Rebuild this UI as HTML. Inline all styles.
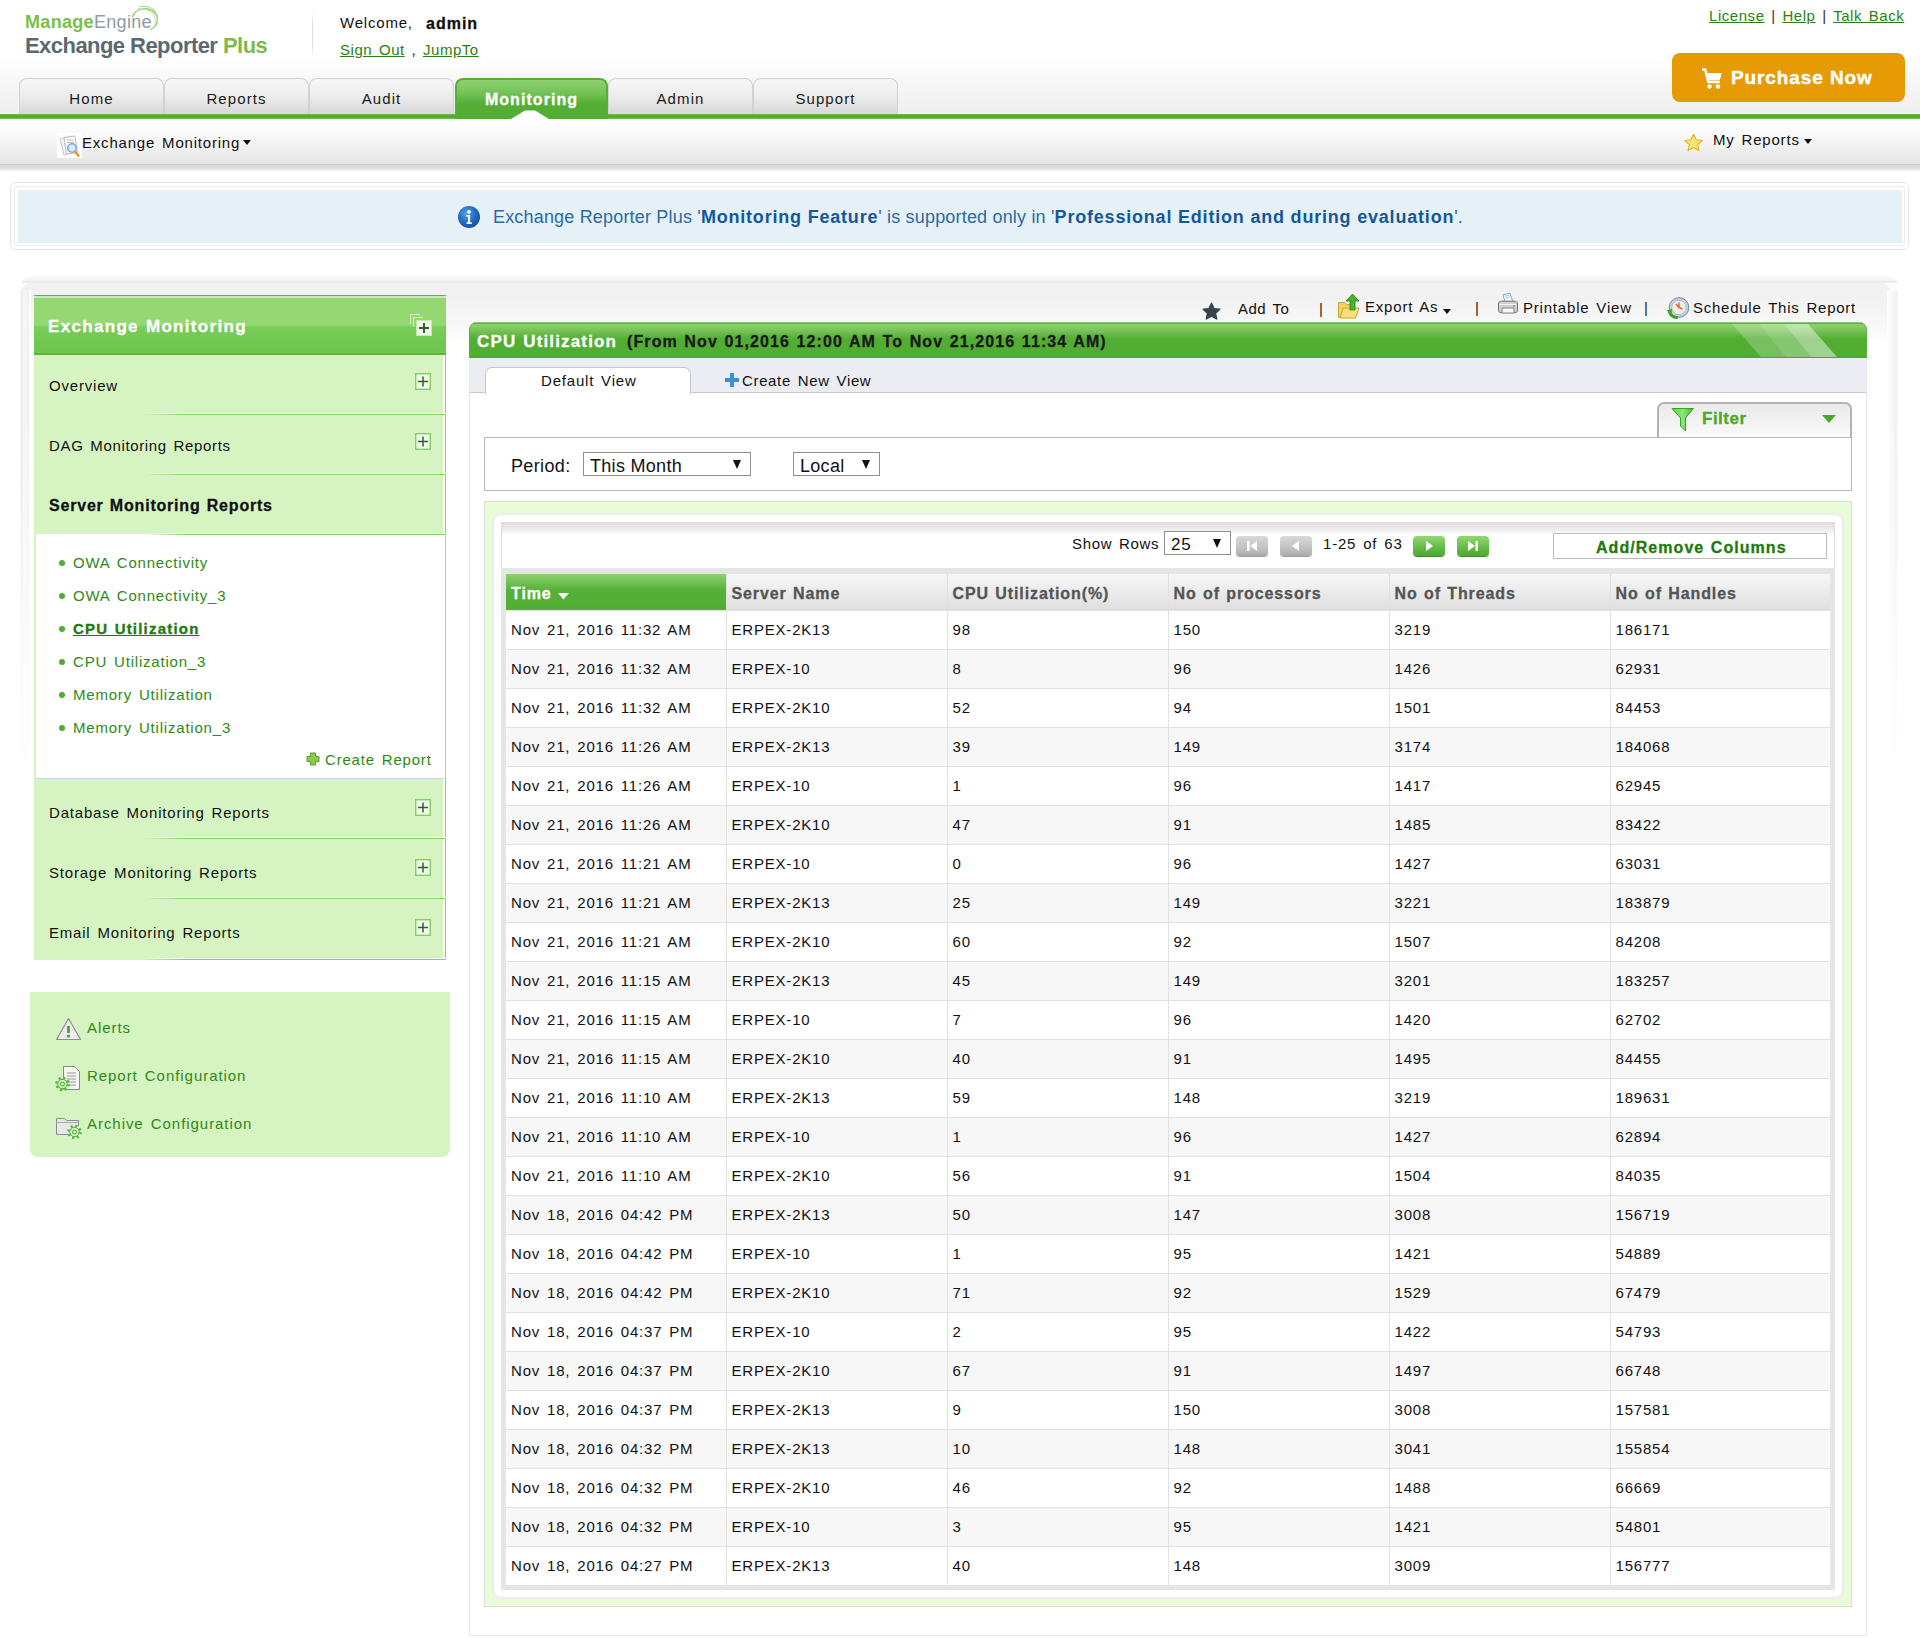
<!DOCTYPE html>
<html><head><meta charset="utf-8">
<style>
*{box-sizing:border-box}
html,body{margin:0;padding:0}
body{width:1920px;height:1639px;overflow:hidden;position:relative;background:#fff;font-family:"Liberation Sans",sans-serif;font-size:15px;color:#111;letter-spacing:.8px;word-spacing:2px}
.a{position:absolute}
.t{position:absolute;white-space:nowrap;line-height:1}
.b{font-weight:bold;font-size:16px;letter-spacing:1px;word-spacing:1px;-webkit-text-stroke:.3px}
a,.lnk{color:#2c7f12;text-decoration:underline}
/* header */
#hdr{left:0;top:0;width:1920px;height:114px;background:linear-gradient(#fff 0,#fff 59px,#f7f7f7 80px,#efefef 114px)}
#gline{left:0;top:114px;width:1920px;height:5px;background:linear-gradient(#7cc264 0,#52ad35 1px,#52ad35 4px,#8ccb75 5px)}
.tab{position:absolute;top:78px;height:40px;width:145px;border:1px solid #d2d2d2;border-bottom:none;border-radius:8px 8px 0 0;background:linear-gradient(#f7f7f7 0,#ececec 45%,#dcdcdc 80%,#d6d6d6 100%);text-align:center;font-size:15px;color:#1b1b1b;line-height:40px;letter-spacing:1.1px}
.tab.on{background:linear-gradient(#8fd070 0,#72c255 35%,#55af37 60%,#52ad35 100%);border:2px solid #55b038;border-bottom:none;color:#fff;font-weight:bold;font-size:16px;letter-spacing:1.05px;line-height:39px;-webkit-text-stroke:.3px}
#sub{left:0;top:119px;width:1920px;height:45px;background:linear-gradient(#fff 0,#f9f9f9 35%,#ececec 75%,#e4e4e4 100%)}
#subsh{left:0;top:164px;width:1920px;height:7px;background:linear-gradient(#cbcbcb 0,#d8d8d8 1.5px,#dedede 4px,#ececec 6px,#fafafa 7px)}
/* info */
#info1{left:10px;top:182px;width:1899px;height:68px;border:1px solid #e6e6f0;border-radius:5px}
#info2{left:14px;top:186px;width:1891px;height:60px;border:1px solid #ececf4;border-radius:2px}
#info3{left:18px;top:190px;width:1884px;height:53px;background:#e6f1f7}
/* main */
#mainsh{left:20px;top:276px;width:1879px;height:560px;border-radius:12px 12px 0 0;background:linear-gradient(#fcfcfc 0,#f3f3f3 4px,#e8e8e8 7px,transparent 7px);-webkit-mask-image:linear-gradient(#000 0,#000 150px,transparent 500px)}
#mainsh2{left:21px;top:283px;width:1870px;height:560px;border-radius:9px 9px 0 0;box-shadow:-1px 0 3px rgba(0,0,0,.06),1px 0 5px rgba(0,0,0,.06);background:linear-gradient(#f1f1f1 0,#f2f2f2 15px,#f7f7f7 40px,#fdfdfd 58px,#fff 65px);-webkit-mask-image:linear-gradient(#000 0,#000 150px,transparent 490px)}
/* left panel */
#lhead{left:34px;top:295px;width:412px;height:60px;background:linear-gradient(#5cb53c 0,#5cb53c 1px,#c8eab8 1px,#c8eab8 3px,#95d872 3px,#95d872 30px,#78cc59 32px,#6cc64c 58px,#5cb53c 58px)}
.lsec{position:absolute;left:34px;width:412px;height:60px;background:#d6f4c2}
.lsec .rb{position:absolute;right:0;top:0;bottom:0;width:3px;background:linear-gradient(90deg,#fafdf8 0,#fafdf8 2px,#86cf6a 2px)}
.lsep{position:absolute;left:34px;width:412px;height:2px;background:linear-gradient(#fff 0,#fff 1px,#86cf6a 1px);-webkit-mask-image:linear-gradient(90deg,transparent 0,transparent 110px,#000 150px)}
.plus{position:absolute;left:415px;width:16px;height:17px}
.li{position:absolute;left:73px;color:#2d8a16;font-size:15px;white-space:nowrap;line-height:1}
.bul{position:absolute;left:59px;width:6px;height:6px;border-radius:3px;background:#4fad35}
.lbot{position:absolute;color:#2d8a16;font-size:15px;white-space:nowrap;line-height:1;letter-spacing:.95px}
/* right */
#cbox{left:469px;top:357px;width:1398px;height:1279px;border:1px solid #e6e6ee;border-top:none;background:#fff}
#chead{left:469px;top:322px;width:1398px;height:36px;border-radius:8px 8px 0 0;background:linear-gradient(#8cc77a 0,#8cc77a 1px,#5cb43c 1px,#5cb43c 2px,#90cf6f 2.5px,#7bc45c 8px,#62b744 13px,#52ae33 17px,#52ae33 34px,#48a828 35px);border:1px solid #56b039;border-top:none;border-bottom:none;overflow:hidden}
#tabstrip{left:470px;top:358px;width:1396px;height:35px;background:#ecedf3;border-bottom:1px solid #c9c9cf}
#dview{left:485px;top:367px;width:206px;height:27px;background:#fff;border:1px solid #c8c8cc;border-bottom:none;border-radius:7px 7px 0 0}
#pbox{left:484px;top:437px;width:1368px;height:54px;border:1px solid #b8b8b8}
#ftab{left:1657px;top:402px;width:195px;height:36px;border:2px solid #b3b3b3;border-bottom:none;border-radius:7px 7px 0 0;background:linear-gradient(#e9e9e9,#f3f3f3 60%,#fcfcfc)}
.sel{position:absolute;height:24px;border:1px solid #8f8f8f;background:#fff;font-size:18px;line-height:26px;padding-left:6px;letter-spacing:.3px;word-spacing:0}
.sel:after{content:"";position:absolute;right:9px;top:7px;border-left:4.5px solid transparent;border-right:4.5px solid transparent;border-top:9px solid #111}
#gbox{left:484px;top:501px;width:1368px;height:106px;background:#e8fcd8;border:1px solid #d8e4d0}
#gbox2{left:484px;top:501px;width:1368px;height:1106px;background:#e8fcd8;border:1px solid #d9ddd6}
#wbox{left:492px;top:513px;width:1352px;height:1086px;background:#fff;border:2px solid #ececf4;border-radius:9px}
#tbar{left:501px;top:522px;width:1334px;height:52px;border:1px solid #dcdcdc;border-bottom:none;background:linear-gradient(#dedede 0,#f2f2f2 8px,#fff 12px,#fff 100%)}
#tframe{left:501px;top:568px;width:1334px;height:1022px;background:#e5e5e5}
#tbl{position:absolute;left:506px;top:574px;width:1324px;border-collapse:collapse;table-layout:fixed}
#tbl th{height:36px;padding:5px 0 0 5px;text-align:left;font-weight:bold;color:#555;font-size:16px;letter-spacing:.9px;word-spacing:1px;-webkit-text-stroke:.3px;background:linear-gradient(#f6f6f6 0,#ececec 45%,#dedede 100%);border-left:1px solid #e0e0e0;white-space:nowrap}
#tbl th.tm{background:linear-gradient(#8dd26d 0,#6fc052 25%,#55b038 45%,#51ae34 100%);color:#fff;border-left:none}
#tbl td{height:39px;padding:0 0 1px 5px;font-size:15px;color:#111;border-left:1px solid #e2e2e2;border-top:1px solid #e2e2e2;white-space:nowrap}
#tbl td:first-child{border-left:none}
#tbl tr:nth-child(odd) td{background:#f7f7f7}
#tbl tr.w td{background:#fff}
.pg{position:absolute;top:536px;width:32px;height:20px;border-radius:4px}
.pg.g{background:linear-gradient(#d9d9d9,#bdbdbd 70%,#a9a9a9);box-shadow:0 1px 0 #9c9c9c}
.pg.gr{background:linear-gradient(#93d873,#62bb45 60%,#4ea732);box-shadow:0 1px 0 #3f8f27}
.pg svg{position:absolute;left:0;top:0}
</style></head><body>
<!-- HEADER -->
<div id="hdr" class="a"></div>
<!-- logo -->
<div class="t" style="left:25px;top:13px;font-size:18px;letter-spacing:.32px"><span style="font-weight:bold;color:#78c047">Manage</span><span style="color:#8d9ca8">Engine</span></div>
<svg class="a" style="left:120px;top:0" width="45" height="35" viewBox="120 0 45 35"><g fill="none" stroke-linecap="round"><path d="M132.5 16.5C135.5 10 142 8 148 9C154 10.5 158 15 157.5 20.5C157 25 154 28 150.5 29.5" stroke="#8fcc66" stroke-width="1.3"/><path d="M139.5 6.5C146 5.5 152 7.5 155 11.5C158 15.5 158.5 21 156 25" stroke="#a5d784" stroke-width="1.1"/><path d="M138 9C145 8 150.5 10.5 153 14C155.5 17.5 156 22 154.5 25.5" stroke="#b9e0a0" stroke-width="1"/></g></svg>
<div class="t" style="left:25px;top:35px;font-size:22px;font-weight:bold;color:#5b6872;letter-spacing:-.55px;word-spacing:0">Exchange Reporter <span style="color:#7cba4a">Plus</span></div>
<div class="a" style="left:312px;top:12px;width:1px;height:46px;background:linear-gradient(rgba(220,220,220,0),#dcdcdc 30%,#dcdcdc 70%,rgba(220,220,220,0))"></div>
<div class="t" style="left:340px;top:15px;color:#111">Welcome,</div>
<div class="t b" style="left:426px;top:16px;color:#111">admin</div>
<div class="t" style="left:340px;top:42px;letter-spacing:.55px"><span class="lnk">Sign Out</span> , <span class="lnk">JumpTo</span></div>
<div class="t" style="left:1709px;top:8px;color:#333;letter-spacing:.55px"><span class="lnk">License</span> | <span class="lnk">Help</span> | <span class="lnk">Talk Back</span></div>
<!-- purchase -->
<div class="a" style="left:1672px;top:53px;width:233px;height:49px;border-radius:8px;background:#e69a04"></div>
<svg class="a" style="left:1701px;top:67px" width="22" height="23" viewBox="0 0 22 23"><path d="M1 2.5h3.2l3 12.5h11.5" fill="none" stroke="#fff" stroke-width="2.4" stroke-linejoin="round"/><path d="M5.2 6h15.6l-2 7.2H7z" fill="#fff"/><circle cx="8.5" cy="19.5" r="2.2" fill="#fff"/><circle cx="17" cy="19.5" r="2.2" fill="#fff"/></svg>
<div class="t" style="left:1731px;top:68px;color:#fff;font-size:19px;font-weight:bold;letter-spacing:.9px;word-spacing:0;-webkit-text-stroke:.45px #fff">Purchase Now</div>
<!-- tabs -->
<div class="tab" style="left:19px">Home</div>
<div class="tab" style="left:164px">Reports</div>
<div class="tab" style="left:309px">Audit</div>
<div class="tab" style="left:608px">Admin</div>
<div class="tab" style="left:753px">Support</div>
<div id="gline" class="a"></div>
<div class="tab on" style="left:455px;width:153px;height:41px">Monitoring</div>
<svg class="a" style="left:510px;top:109px" width="40" height="10" viewBox="0 0 40 10"><path d="M1 10L15 1.5h10L39 10z" fill="#fff"/></svg>
<!-- subnav -->
<div id="sub" class="a"></div>
<div id="subsh" class="a"></div>
<svg class="a" style="left:57px;top:133px" width="25" height="25" viewBox="0 0 25 25"><rect x="0" y="0" width="25" height="25" fill="#fff"/><path d="M3 6l12-3 4 16-12 3z" fill="#f2f2f2" stroke="#c8c8c8"/><path d="M7 4.5l11-1.5 2.5 16.5-11 1.5z" fill="#fafafa" stroke="#bdbdbd"/><path d="M10 7h7M10 9.5h7" stroke="#c4c4c4"/><circle cx="15" cy="15" r="4.2" fill="#d4ecfb" stroke="#7ea8de" stroke-width="1.6"/><path d="M18 18.5l4 5" stroke="#e79a22" stroke-width="2.4"/></svg>
<div class="t" style="left:82px;top:135px;color:#111">Exchange Monitoring</div>
<div class="a" style="left:243px;top:140px;border-left:4px solid transparent;border-right:4px solid transparent;border-top:5px solid #111"></div>
<svg class="a" style="left:1683px;top:133px" width="21" height="20" viewBox="0 0 21 20"><path d="M10.5 1.2l2.6 5.6 6.1.7-4.5 4.1 1.2 6-5.4-3-5.4 3 1.2-6-4.5-4.1 6.1-.7z" fill="#f8e27a" stroke="#e0b318" stroke-width="1.1" stroke-linejoin="round"/></svg>
<div class="t" style="left:1713px;top:132px;color:#111">My Reports</div>
<div class="a" style="left:1804px;top:139px;border-left:4px solid transparent;border-right:4px solid transparent;border-top:5px solid #111"></div>
<!-- info bar -->
<div id="info1" class="a"></div>
<div id="info2" class="a"></div>
<div id="info3" class="a"></div>
<svg class="a" style="left:457px;top:205px" width="24" height="24" viewBox="0 0 24 24"><defs><radialGradient id="ig" cx=".4" cy=".35" r=".7"><stop offset="0" stop-color="#5aa6ea"/><stop offset=".6" stop-color="#1e68be"/><stop offset="1" stop-color="#164f98"/></radialGradient></defs><circle cx="12" cy="12" r="11" fill="url(#ig)"/><circle cx="12" cy="6.8" r="1.9" fill="#fff"/><path d="M9.5 10h3.6v7.2h1.6v1.8H9.5v-1.8h1.6v-5.4H9.5z" fill="#fff"/></svg>
<div class="t" style="left:493px;top:208px;font-size:18px;letter-spacing:.18px;word-spacing:0;color:#2b69a3">Exchange Reporter Plus '<b style="color:#14579b;letter-spacing:.8px">Monitoring Feature</b>' is supported only in '<b style="color:#14579b;letter-spacing:.8px">Professional Edition and during evaluation</b>'.</div>
<!-- main container -->
<div id="mainsh" class="a"></div>
<div id="mainsh2" class="a"></div>
<div class="a" style="left:20px;top:290px;width:11px;height:500px;background:linear-gradient(90deg,#f7f7f7 0,#ebebeb 1.5px,#f3f3f3 3px,#f6f6f6 6px,#f0f0f0 8px,#fbfbfb 10px,#fff 11px);-webkit-mask-image:linear-gradient(#000 0,#000 120px,transparent 490px)"></div>
<div class="a" style="left:1887px;top:290px;width:11px;height:500px;background:linear-gradient(270deg,#f9f9f9 0,#efefef 2px,#f5f5f5 4px,#f8f8f8 7px,#fff 11px);-webkit-mask-image:linear-gradient(#000 0,#000 120px,transparent 490px)"></div>

<!-- LEFT PANEL -->
<div id="lhead" class="a"></div>
<div class="t b" style="left:48px;top:318px;color:#fff;font-size:17px;letter-spacing:1.32px">Exchange Monitoring</div>
<svg class="a" style="left:408px;top:312px" width="26" height="25" viewBox="0 0 26 25"><g fill="none" stroke="#d9f2cc" stroke-width="1"><path d="M2.5 12V2.5H12"/><path d="M5.5 15V5.5H15"/></g><rect x="8.5" y="8.5" width="15" height="15" fill="#f4fbf0" stroke="#c6eab3"/><path d="M11 16h10M16 11v10" stroke="#2f5f22" stroke-width="2"/></svg>
<div class="lsec" style="top:355px"><div class="rb"></div></div>
<div class="lsec" style="top:415px"><div class="rb"></div></div>
<div class="lsec" style="top:475px"><div class="rb"></div></div>
<div class="a" style="left:34px;top:534px;width:412px;height:245px;background:#fff;border-left:2px solid #d3f1bf;border-right:1px solid #9ddb83;border-bottom:1px solid #c6d9ec"></div>
<div class="lsec" style="top:779px"><div class="rb"></div></div>
<div class="lsec" style="top:839px"><div class="rb"></div></div>
<div class="lsec" style="top:899px;height:61px"><div class="rb"></div></div>
<div class="lsep" style="top:413px"></div>
<div class="lsep" style="top:473px"></div>
<div class="lsep" style="top:533px"></div>
<div class="lsep" style="top:837px"></div>
<div class="lsep" style="top:897px"></div>
<div class="lsep" style="top:958px"></div>
<div class="t" style="left:49px;top:378px">Overview</div>
<div class="t" style="left:49px;top:438px;letter-spacing:.65px">DAG Monitoring Reports</div>
<div class="t b" style="left:49px;top:498px;letter-spacing:.8px">Server Monitoring Reports</div>
<div class="t" style="left:49px;top:805px">Database Monitoring Reports</div>
<div class="t" style="left:49px;top:865px">Storage Monitoring Reports</div>
<div class="t" style="left:49px;top:925px">Email Monitoring Reports</div>
<div class="plus" style="top:373px"><svg width="16" height="17" viewBox="0 0 16 17"><rect x=".7" y=".7" width="14.6" height="15.6" fill="#f1faec" stroke="#7fcf62" stroke-width="1.4"/><path d="M3 8.5h10M8 3.5v10" stroke="#2f6325" stroke-width="1.5"/></svg></div>
<div class="plus" style="top:433px"><svg width="16" height="17" viewBox="0 0 16 17"><rect x=".7" y=".7" width="14.6" height="15.6" fill="#f1faec" stroke="#7fcf62" stroke-width="1.4"/><path d="M3 8.5h10M8 3.5v10" stroke="#2f6325" stroke-width="1.5"/></svg></div>
<div class="plus" style="top:799px"><svg width="16" height="17" viewBox="0 0 16 17"><rect x=".7" y=".7" width="14.6" height="15.6" fill="#f1faec" stroke="#7fcf62" stroke-width="1.4"/><path d="M3 8.5h10M8 3.5v10" stroke="#2f6325" stroke-width="1.5"/></svg></div>
<div class="plus" style="top:859px"><svg width="16" height="17" viewBox="0 0 16 17"><rect x=".7" y=".7" width="14.6" height="15.6" fill="#f1faec" stroke="#7fcf62" stroke-width="1.4"/><path d="M3 8.5h10M8 3.5v10" stroke="#2f6325" stroke-width="1.5"/></svg></div>
<div class="plus" style="top:919px"><svg width="16" height="17" viewBox="0 0 16 17"><rect x=".7" y=".7" width="14.6" height="15.6" fill="#f1faec" stroke="#7fcf62" stroke-width="1.4"/><path d="M3 8.5h10M8 3.5v10" stroke="#2f6325" stroke-width="1.5"/></svg></div>
<div class="bul" style="top:560px"></div><div class="li" style="top:555px">OWA Connectivity</div>
<div class="bul" style="top:593px"></div><div class="li" style="top:588px">OWA Connectivity_3</div>
<div class="bul" style="top:626px"></div><div class="li b" style="top:621px;text-decoration:underline;color:#237a0c;letter-spacing:1.2px">CPU Utilization</div>
<div class="bul" style="top:659px"></div><div class="li" style="top:654px">CPU Utilization_3</div>
<div class="bul" style="top:692px"></div><div class="li" style="top:687px">Memory Utilization</div>
<div class="bul" style="top:725px"></div><div class="li" style="top:720px">Memory Utilization_3</div>
<svg class="a" style="left:306px;top:752px" width="14" height="14" viewBox="0 0 14 14"><path d="M4.5 1h5v3.5H13v5H9.5V13h-5V9.5H1v-5h3.5z" fill="#8acb4f" stroke="#5f9a2c" stroke-width="1"/></svg>
<div class="li" style="left:325px;top:752px">Create Report</div>
<!-- bottom box -->
<div class="a" style="left:30px;top:992px;width:420px;height:165px;background:#d6f4c2;border-radius:0 0 8px 8px"></div>
<svg class="a" style="left:55px;top:1017px" width="27" height="24" viewBox="0 0 27 24"><path d="M13.5 1.5L25.5 22.5H1.5z" fill="#ececec" stroke="#8f8f8f" stroke-width="1.2" stroke-linejoin="round"/><path d="M13.5 9v7" stroke="#3aa12a" stroke-width="2.6"/><rect x="12.2" y="17.8" width="2.6" height="2.6" fill="#3aa12a"/></svg>
<div class="lbot" style="left:87px;top:1020px">Alerts</div>
<svg class="a" style="left:54px;top:1065px" width="30" height="27" viewBox="0 0 30 27"><path d="M9.5 1.5h11l5 5v18h-16z" fill="#f4f4f4" stroke="#8a8a8a"/><path d="M13 8h9M13 11h9M13 14h9M13 17h9M13 20h9" stroke="#9a9a9a"/><circle cx="8.5" cy="19" r="6" fill="none" stroke="#5cb842" stroke-width="2.6" stroke-dasharray="2.3 2.4"/><circle cx="8.5" cy="19" r="4.6" fill="#e6f5dc" stroke="#5cb842" stroke-width="1.3"/><circle cx="8.5" cy="19" r="1.9" fill="none" stroke="#5cb842" stroke-width="1.2"/></svg>
<div class="lbot" style="left:87px;top:1068px">Report Configuration</div>
<svg class="a" style="left:55px;top:1114px" width="28" height="26" viewBox="0 0 28 26"><path d="M1.5 4.5h8l2 2h12v14h-22z" fill="#e6e6e6" stroke="#8d8d8d"/><path d="M1.5 8.5h22" stroke="#aaa"/><circle cx="19.5" cy="18" r="7" fill="#f4fbef"/><circle cx="19.5" cy="18" r="6" fill="none" stroke="#5cb842" stroke-width="2.6" stroke-dasharray="2.3 2.4"/><circle cx="19.5" cy="18" r="4.6" fill="#e6f5dc" stroke="#5cb842" stroke-width="1.3"/><circle cx="19.5" cy="18" r="1.9" fill="none" stroke="#5cb842" stroke-width="1.2"/></svg>
<div class="lbot" style="left:87px;top:1116px">Archive Configuration</div>

<!-- RIGHT CONTENT -->
<div id="cbox" class="a"></div>
<div id="chead" class="a"></div>
<div class="t b" style="left:477px;top:333px;color:#fff;font-size:17px;letter-spacing:1.15px">CPU Utilization</div>
<div class="t b" style="left:627px;top:334px;color:#1a1a1a;font-size:16px;letter-spacing:1.1px">(From Nov 01,2016 12:00 AM To Nov 21,2016 11:34 AM)</div>
<svg class="a" style="left:1720px;top:324px" width="130" height="33" viewBox="0 0 130 33"><path d="M12 0h27l27 33H41z" fill="#fff" fill-opacity=".22"/><path d="M39 0h25l27 33H66z" fill="#fff" fill-opacity=".3"/><path d="M64 0h24l29 33H91z" fill="#fff" fill-opacity=".45"/></svg>
<!-- toolbar -->
<svg class="a" style="left:1202px;top:302px" width="19" height="18" viewBox="0 0 19 18"><path d="M9.5 1.2l2.5 5.4 5.8.7-4.3 4 1.2 5.7-5.2-2.9-5.2 2.9 1.2-5.7-4.3-4 5.8-.7z" fill="#3a444c" stroke="#3a444c" stroke-width="1.4" stroke-linejoin="round"/></svg>
<div class="t" style="left:1238px;top:301px;letter-spacing:.5px">Add To</div>
<div class="t" style="left:1319px;top:301px;color:#222">|</div>
<svg class="a" style="left:1337px;top:293px" width="24" height="26" viewBox="0 0 24 26"><path d="M1.5 9.5h6l2 2h8v13h-16z" fill="#f3d35c" stroke="#c9a52a"/><path d="M3 25l3-10h16l-3.5 10z" fill="#f7e07a" stroke="#caa62c"/><path d="M15.5 1l6.5 7h-4v9h-5V8h-4z" fill="#4cb02e" stroke="#2e7d18" stroke-width=".8"/></svg>
<div class="t" style="left:1365px;top:299px">Export As</div>
<div class="a" style="left:1443px;top:309px;border-left:4px solid transparent;border-right:4px solid transparent;border-top:5px solid #111"></div>
<div class="t" style="left:1475px;top:300px;color:#222">|</div>
<svg class="a" style="left:1497px;top:293px" width="22" height="22" viewBox="0 0 22 22"><path d="M6 1.5l7-1 3 8-8 1.2z" fill="#e8f4fb" stroke="#8aa4b8" stroke-width=".9"/><path d="M8 3l4-.6M8.6 5l4-.6" stroke="#9ec8e8" stroke-width=".8"/><path d="M1.5 11c0-1.6 1.2-2.8 2.8-2.8h13.4c1.6 0 2.8 1.2 2.8 2.8v6.5c0 1.3-1 2.2-2.2 2.2H3.7c-1.2 0-2.2-.9-2.2-2.2z" fill="#cfcfcf" stroke="#6f6f6f"/><path d="M2.5 11.5h17" stroke="#f2f2f2" stroke-width="1.2"/><path d="M5 15h12v5H5z" fill="#f6f6f6" stroke="#7d7d7d" stroke-width=".9"/><circle cx="17" cy="13" r=".9" fill="#58b13c"/></svg>
<div class="t" style="left:1523px;top:300px">Printable View</div>
<div class="t" style="left:1644px;top:300px;color:#222">|</div>
<svg class="a" style="left:1666px;top:296px" width="24" height="23" viewBox="0 0 24 23"><circle cx="13" cy="11.5" r="9.8" fill="#c2d2e6" stroke="#6b87a6" stroke-width="1"/><circle cx="13" cy="11.5" r="7.2" fill="#f7eedd" stroke="#9fb2c6" stroke-width=".8"/><path d="M13 6.5v5l3.5 1.5M10 8l3 3.5" stroke="#d0663e" stroke-width="1.4" fill="none"/><path d="M3.2 15.5c1.2 3.5 4.6 6 8.6 6.2" stroke="#3da52a" stroke-width="3" fill="none"/><path d="M.5 14.5l5.5-1.8-.8 5.2z" fill="#3da52a"/></svg>
<div class="t" style="left:1693px;top:300px;letter-spacing:.75px">Schedule This Report</div>
<div id="tabstrip" class="a"></div>
<div id="dview" class="a"></div>
<div class="t" style="left:541px;top:373px">Default View</div>
<svg class="a" style="left:725px;top:373px" width="14" height="14" viewBox="0 0 14 14"><path d="M5 0h4v5h5v4H9v5H5V9H0V5h5z" fill="#3a8fdc"/></svg>
<div class="t" style="left:742px;top:373px;letter-spacing:.65px">Create New View</div>
<div id="ftab" class="a"></div>
<div id="pbox" class="a"></div>
<svg class="a" style="left:1671px;top:407px" width="24" height="25" viewBox="0 0 24 25"><defs><linearGradient id="fg" x1="0" x2="1"><stop offset="0" stop-color="#5fd04a"/><stop offset=".5" stop-color="#8ae874"/><stop offset="1" stop-color="#3fb62c"/></linearGradient></defs><path d="M1 1.5h21.5l-8 9.5v13l-5-5V11z" fill="url(#fg)" stroke="#38a126" stroke-width="1"/></svg>
<div class="t b" style="left:1702px;top:410px;color:#4aa82a;font-size:17px;letter-spacing:.5px">Filter</div>
<div class="a" style="left:1822px;top:415px;border-left:7px solid transparent;border-right:7px solid transparent;border-top:8px solid #4aa82a"></div>
<div class="t" style="left:511px;top:457px;font-size:18px;letter-spacing:.35px">Period:</div>
<div class="sel" style="left:583px;top:452px;width:168px">This Month</div>
<div class="sel" style="left:793px;top:452px;width:87px">Local</div>

<div id="gbox2" class="a"></div>
<div id="wbox" class="a"></div>
<div id="tbar" class="a"></div>
<div id="tframe" class="a"></div>
<div class="t" style="left:1072px;top:536px;letter-spacing:.65px">Show Rows</div>
<div class="sel" style="left:1164px;top:531px;width:67px;height:24px;font-size:17px;line-height:26px;padding-left:6px;letter-spacing:.8px">25</div>
<div class="pg g" style="left:1236px"><svg width="32" height="20" viewBox="0 0 32 20"><path d="M11 5h2.5v10H11z M21 5v10l-7-5z" fill="#fff"/></svg></div>
<div class="pg g" style="left:1280px"><svg width="32" height="20" viewBox="0 0 32 20"><path d="M19 5v10l-7-5z" fill="#fff"/></svg></div>
<div class="t" style="left:1323px;top:536px">1-25 of 63</div>
<div class="pg gr" style="left:1413px"><svg width="32" height="20" viewBox="0 0 32 20"><path d="M13 5v10l7-5z" fill="#fff"/></svg></div>
<div class="pg gr" style="left:1457px"><svg width="32" height="20" viewBox="0 0 32 20"><path d="M11 5v10l7-5z M18.5 5H21v10h-2.5z" fill="#fff"/></svg></div>
<div class="a" style="left:1553px;top:533px;width:274px;height:26px;border:1px solid #bdbdbd;background:#fff"></div>
<div class="t b" style="left:1596px;top:540px;color:#1d7a0c;letter-spacing:1.05px">Add/Remove Columns</div>
<table id="tbl"><colgroup><col style="width:220px"><col style="width:221px"><col style="width:221px"><col style="width:221px"><col style="width:221px"><col style="width:220px"></colgroup>
<tr><th class="tm">Time <svg width="11" height="7" viewBox="0 0 11 7" style="vertical-align:-1px;margin-left:0"><path d="M0 0h11L5.5 6.5z" fill="#fff"/></svg></th><th>Server Name</th><th>CPU Utilization(%)</th><th>No of processors</th><th>No of Threads</th><th>No of Handles</th></tr>
<tr class="w"><td>Nov 21, 2016 11:32 AM</td><td>ERPEX-2K13</td><td>98</td><td>150</td><td>3219</td><td>186171</td></tr>
<tr><td>Nov 21, 2016 11:32 AM</td><td>ERPEX-10</td><td>8</td><td>96</td><td>1426</td><td>62931</td></tr>
<tr class="w"><td>Nov 21, 2016 11:32 AM</td><td>ERPEX-2K10</td><td>52</td><td>94</td><td>1501</td><td>84453</td></tr>
<tr><td>Nov 21, 2016 11:26 AM</td><td>ERPEX-2K13</td><td>39</td><td>149</td><td>3174</td><td>184068</td></tr>
<tr class="w"><td>Nov 21, 2016 11:26 AM</td><td>ERPEX-10</td><td>1</td><td>96</td><td>1417</td><td>62945</td></tr>
<tr><td>Nov 21, 2016 11:26 AM</td><td>ERPEX-2K10</td><td>47</td><td>91</td><td>1485</td><td>83422</td></tr>
<tr class="w"><td>Nov 21, 2016 11:21 AM</td><td>ERPEX-10</td><td>0</td><td>96</td><td>1427</td><td>63031</td></tr>
<tr><td>Nov 21, 2016 11:21 AM</td><td>ERPEX-2K13</td><td>25</td><td>149</td><td>3221</td><td>183879</td></tr>
<tr class="w"><td>Nov 21, 2016 11:21 AM</td><td>ERPEX-2K10</td><td>60</td><td>92</td><td>1507</td><td>84208</td></tr>
<tr><td>Nov 21, 2016 11:15 AM</td><td>ERPEX-2K13</td><td>45</td><td>149</td><td>3201</td><td>183257</td></tr>
<tr class="w"><td>Nov 21, 2016 11:15 AM</td><td>ERPEX-10</td><td>7</td><td>96</td><td>1420</td><td>62702</td></tr>
<tr><td>Nov 21, 2016 11:15 AM</td><td>ERPEX-2K10</td><td>40</td><td>91</td><td>1495</td><td>84455</td></tr>
<tr class="w"><td>Nov 21, 2016 11:10 AM</td><td>ERPEX-2K13</td><td>59</td><td>148</td><td>3219</td><td>189631</td></tr>
<tr><td>Nov 21, 2016 11:10 AM</td><td>ERPEX-10</td><td>1</td><td>96</td><td>1427</td><td>62894</td></tr>
<tr class="w"><td>Nov 21, 2016 11:10 AM</td><td>ERPEX-2K10</td><td>56</td><td>91</td><td>1504</td><td>84035</td></tr>
<tr><td>Nov 18, 2016 04:42 PM</td><td>ERPEX-2K13</td><td>50</td><td>147</td><td>3008</td><td>156719</td></tr>
<tr class="w"><td>Nov 18, 2016 04:42 PM</td><td>ERPEX-10</td><td>1</td><td>95</td><td>1421</td><td>54889</td></tr>
<tr><td>Nov 18, 2016 04:42 PM</td><td>ERPEX-2K10</td><td>71</td><td>92</td><td>1529</td><td>67479</td></tr>
<tr class="w"><td>Nov 18, 2016 04:37 PM</td><td>ERPEX-10</td><td>2</td><td>95</td><td>1422</td><td>54793</td></tr>
<tr><td>Nov 18, 2016 04:37 PM</td><td>ERPEX-2K10</td><td>67</td><td>91</td><td>1497</td><td>66748</td></tr>
<tr class="w"><td>Nov 18, 2016 04:37 PM</td><td>ERPEX-2K13</td><td>9</td><td>150</td><td>3008</td><td>157581</td></tr>
<tr><td>Nov 18, 2016 04:32 PM</td><td>ERPEX-2K13</td><td>10</td><td>148</td><td>3041</td><td>155854</td></tr>
<tr class="w"><td>Nov 18, 2016 04:32 PM</td><td>ERPEX-2K10</td><td>46</td><td>92</td><td>1488</td><td>66669</td></tr>
<tr><td>Nov 18, 2016 04:32 PM</td><td>ERPEX-10</td><td>3</td><td>95</td><td>1421</td><td>54801</td></tr>
<tr class="w"><td>Nov 18, 2016 04:27 PM</td><td>ERPEX-2K13</td><td>40</td><td>148</td><td>3009</td><td>156777</td></tr>
</table>

</body></html>
